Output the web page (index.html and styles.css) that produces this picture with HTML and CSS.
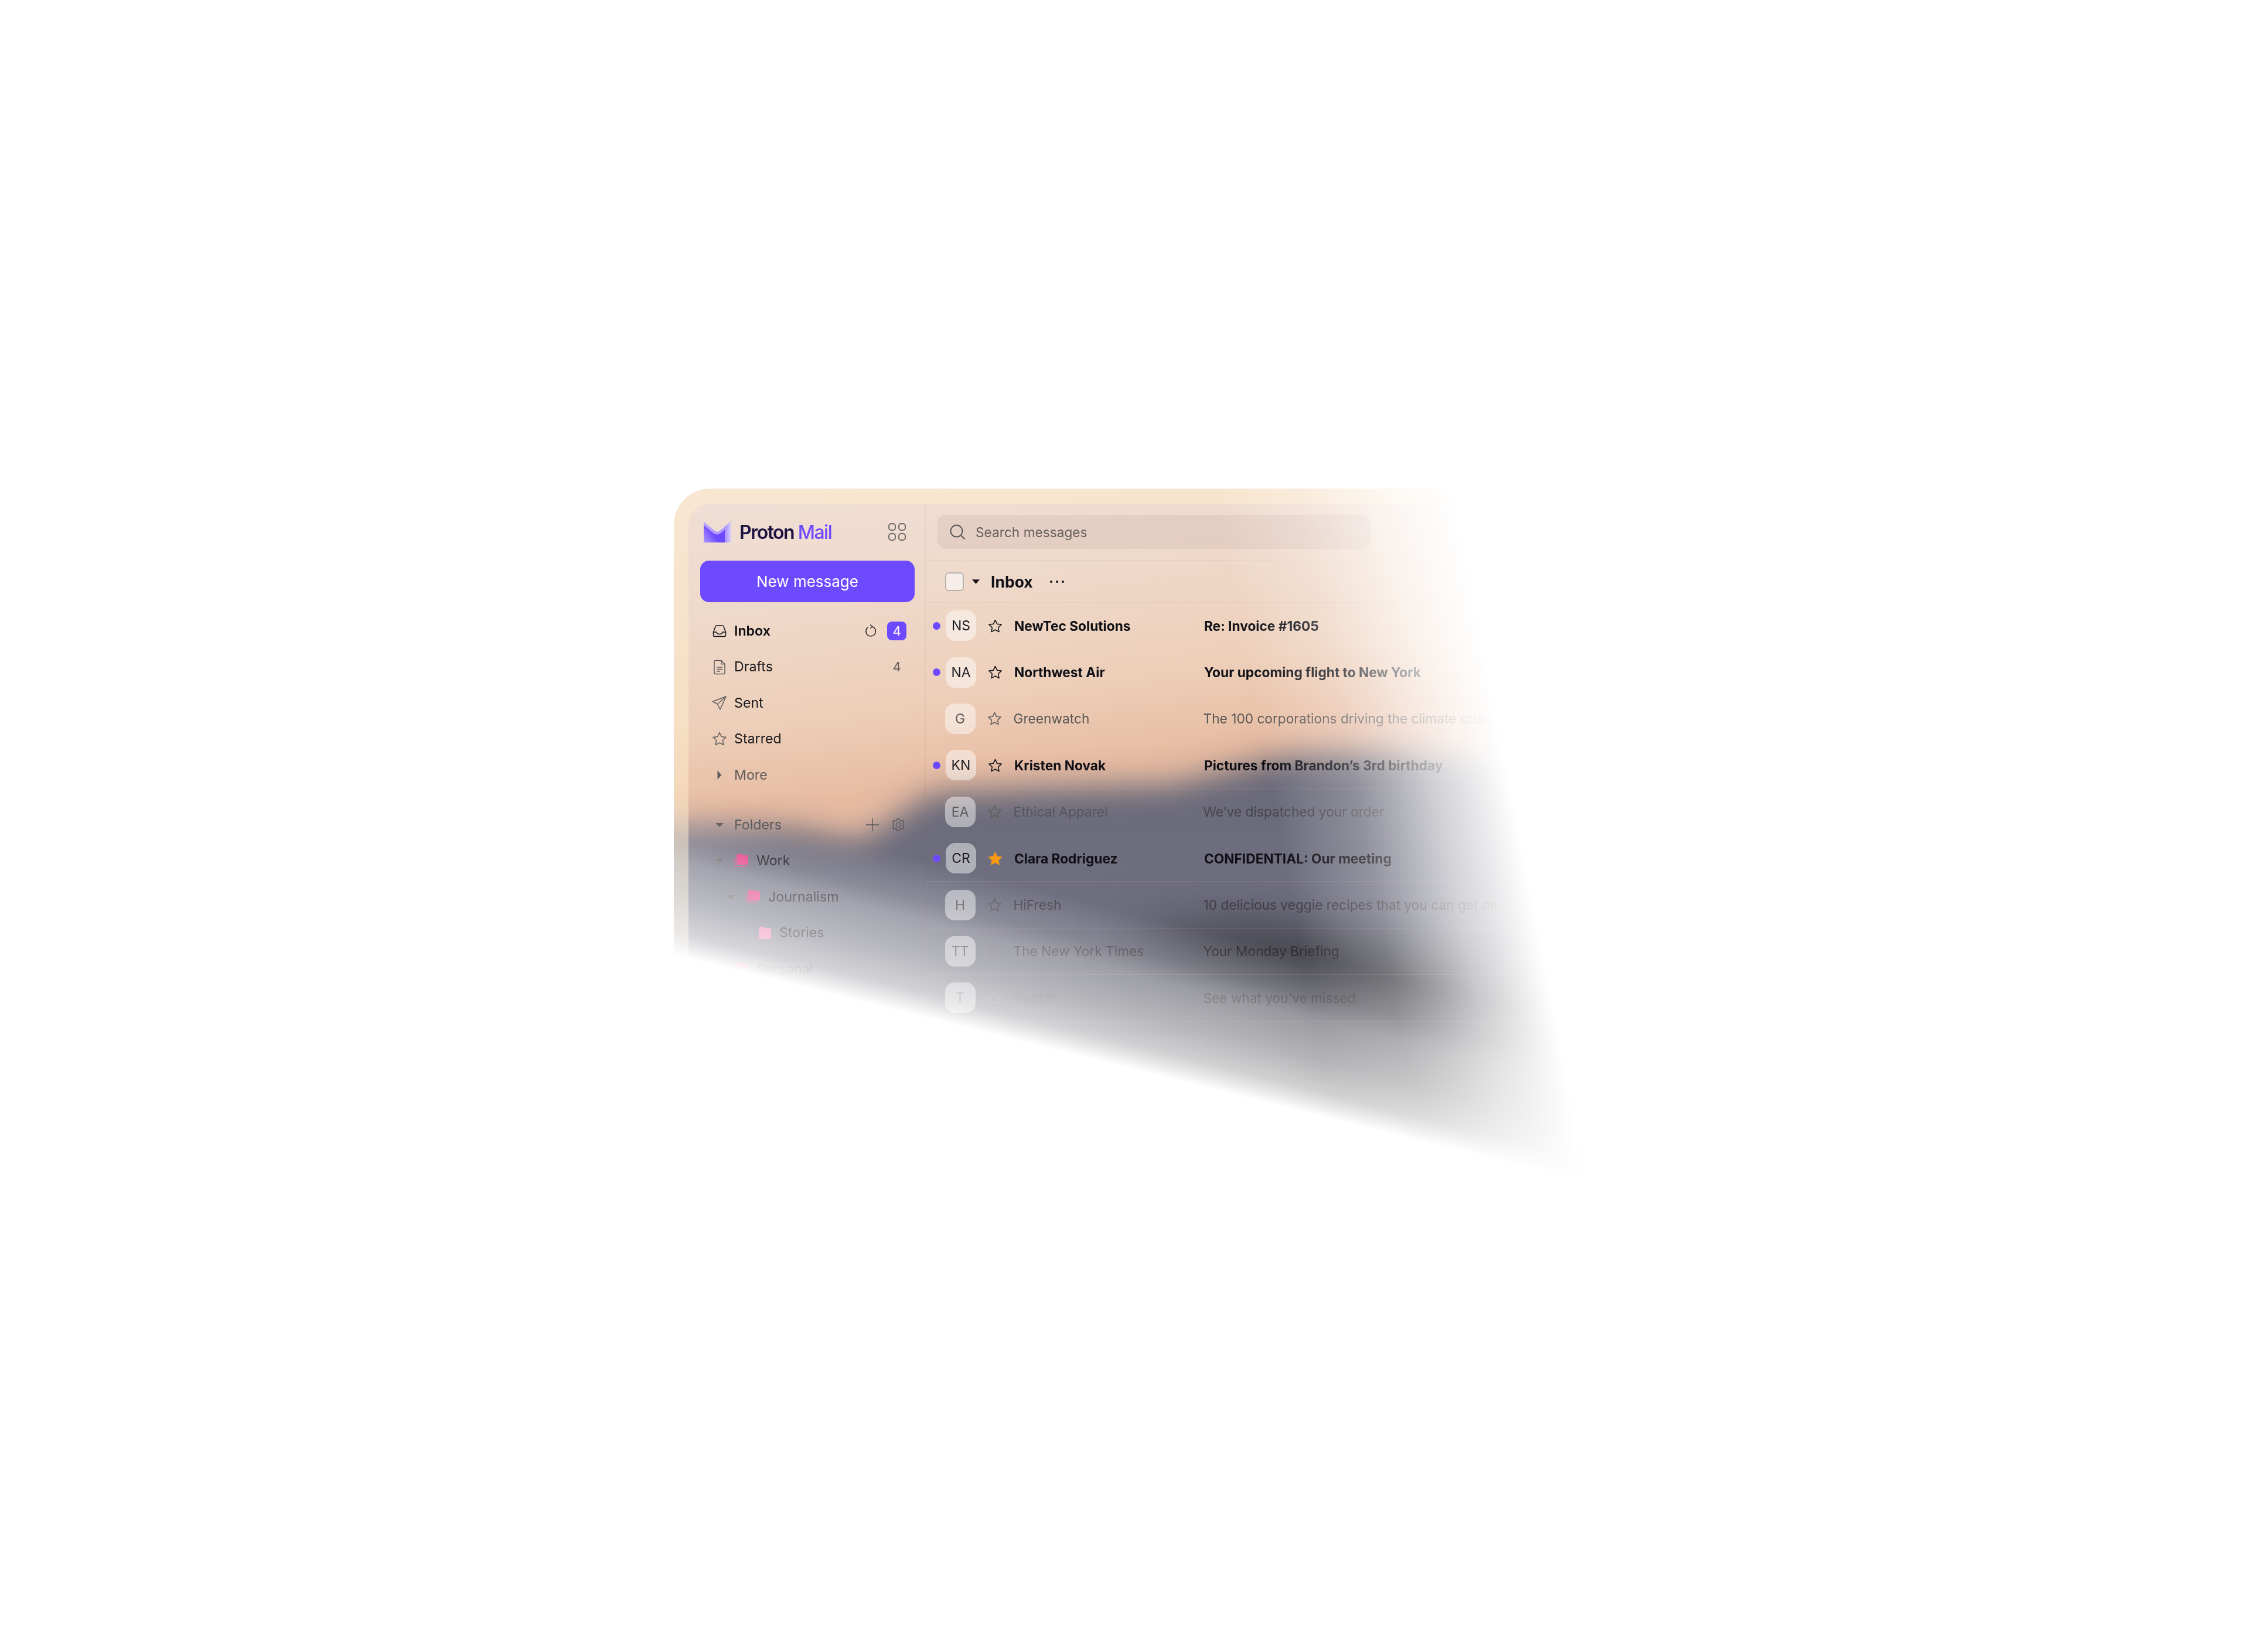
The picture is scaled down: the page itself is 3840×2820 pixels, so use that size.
FILE: index.html
```html
<!DOCTYPE html>
<html lang="en">
<head>
<meta charset="utf-8">
<title>Proton Mail</title>
<link rel="stylesheet" href="styles.css">
</head>
<body>
<div class="stage">
  <svg class="scene" viewBox="0 0 1600 1200" width="1600" height="1200" aria-hidden="true">
    <defs>
      <linearGradient id="sky" x1="0" y1="0" x2="0.18" y2="1">
        <stop offset="0" stop-color="#f1dfd6"/>
        <stop offset="0.18" stop-color="#efd9ca"/>
        <stop offset="0.34" stop-color="#edcfb9"/>
        <stop offset="0.46" stop-color="#e7bba2"/>
      </linearGradient>
      <linearGradient id="land" x1="0" y1="0" x2="0" y2="1">
        <stop offset="0" stop-color="#676776"/>
        <stop offset="0.32" stop-color="#707081"/>
        <stop offset="0.5" stop-color="#61616d"/>
        <stop offset="0.68" stop-color="#59595c"/>
        <stop offset="1" stop-color="#4f4f50"/>
      </linearGradient>
    </defs>
    <rect width="1600" height="1200" fill="url(#sky)"/>
    <polygon class="blur-l" points="-80,575 200,580 320,600 440,520 600,512 850,505 1050,455 1200,450 1700,480 1700,1300 -80,1300" fill="url(#land)"/>
    <polygon class="blur-m" points="760,750 1000,745 1400,825 1500,925 1250,905 950,815" fill="#3e3e44"/>
  </svg>
  <div class="rim"></div>
  <div class="app">
    <aside class="sidebar">
      <div class="brand">
        <svg class="logo" viewBox="0 0 46 36" width="46" height="36" aria-hidden="true">
          <defs>
            <linearGradient id="lg-a" x1="0" y1="0" x2="0.35" y2="1"><stop offset="0" stop-color="#c3b0ff"/><stop offset="1" stop-color="#a68cff"/></linearGradient>
            <linearGradient id="lg-b" x1="0" y1="1" x2="1" y2="0.4"><stop offset="0" stop-color="#b09aff"/><stop offset="0.55" stop-color="#6d4aff"/></linearGradient>
            <linearGradient id="lg-c" x1="0" y1="0" x2="1" y2="0"><stop offset="0" stop-color="#a58dff"/><stop offset="1" stop-color="#d6caff"/></linearGradient>
          </defs>
          <path d="M0 0 18 15.500Q23 20 28 15.500L46 0V33a3 3 0 0 1-3 3H3a3 3 0 0 1-3-3Z" fill="url(#lg-a)"/>
          <path d="M0 6 16 20Q23 25 30 19.500L36 14V36H3a3 3 0 0 1-3-3Z" fill="url(#lg-b)"/>
          <path d="M36 9 46 0V33a3 3 0 0 1-3 3H36Z" fill="url(#lg-c)"/>
        </svg>
        <span class="wordmark">Proton <b class="wordmark-mail">Mail</b></span>
        <svg class="apps" viewBox="0 0 30 30" width="30" height="30" aria-hidden="true"><rect x="1" y="1" width="11" height="11" rx="4"/><rect x="18" y="1" width="11" height="11" rx="4"/><rect x="1" y="18" width="11" height="11" rx="4"/><rect x="18" y="18" width="11" height="11" rx="4"/></svg>
      </div>
      <button class="compose">New message</button>
      <nav class="nav">
        <div class="nav-row strong">
          <svg class="ic dark" viewBox="0 0 24 24"><path d="M1.500 14v5.500a2 2 0 0 0 2 2h17a2 2 0 0 0 2-2V14l-3.500-9.500a2 2 0 0 0-1.900-1.500H6.900A2 2 0 0 0 5 4.500Z"/><path d="M1.500 14H7c.5 2.500 2.500 3.500 5 3.500s4.500-1 5-3.500h5.500"/></svg>
          <span class="nav-label">Inbox</span>
          <svg class="ic dark refresh" viewBox="0 0 24 24"><path d="M14 3.500A9.500 9.500 0 1 1 6 5"/><path d="M10.500 0 14.500 3.500 10.500 7"/></svg>
          <span class="badge">4</span>
        </div>
        <div class="nav-row">
          <svg class="ic" viewBox="0 0 24 24"><path d="M3 3.500a2 2 0 0 1 2-2h10l6 6v15a2 2 0 0 1-2 2H5a2 2 0 0 1-2-2Z"/><path d="M15 1.500v6h6M7 13h10M7 16.500h10M7 20h6"/></svg>
          <span class="nav-label">Drafts</span><span class="count">4</span>
        </div>
        <div class="nav-row">
          <svg class="ic" viewBox="0 0 24 24"><path d="M23 1 .500 9.500l8 4.500L13 23Z"/><path d="M23 1 8.500 14"/></svg>
          <span class="nav-label">Sent</span>
        </div>
        <div class="nav-row">
          <svg class="ic" viewBox="0 0 24 24"><path d="m12 1.500 3.300 7 7.700 1-5.600 5.300 1.400 7.700L12 18.800l-6.800 3.700 1.400-7.700L1 9.500l7.700-1Z"/></svg>
          <span class="nav-label">Starred</span>
        </div>
        <div class="nav-row muted">
          <svg class="ic" viewBox="0 0 24 24"><path class="solid" d="M8.500 4.500 15.500 12l-7 7.500Z"/></svg>
          <span class="nav-label">More</span>
        </div>
        <div class="nav-row muted section">
          <svg class="ic" viewBox="0 0 24 24"><path class="solid" d="M5 9h14l-7 7Z"/></svg>
          <span class="nav-label">Folders</span>
          <svg class="ic plus" viewBox="0 0 24 24"><path d="M12 0v24M0 12h24"/></svg>
          <svg class="ic gear" viewBox="0 0 24 24"><circle cx="12" cy="12" r="4"/><path d="M10 1h4l.6 3 2.700 1.200L20 3.500 22.500 6.500l-1.800 2.500.6 2v2l-.6 2 1.800 2.500L20 20.500l-2.700-1.700-2.700 1.200-.6 3h-4l-.6-3-2.700-1.200L4 20.500 1.500 17.500 3.300 15l-.6-2v-2l.6-2L1.500 6.500 4 3.500l2.700 1.700L9.400 4Z"/></svg>
        </div>
        <div class="nav-row folder l1">
          <svg class="ic caret" viewBox="0 0 24 24"><path class="solid" d="M5 9h14l-7 7Z"/></svg>
          <svg class="fold" viewBox="0 0 26 24"><path class="fold-back" d="M1 6v13a3 3 0 0 0 3 3h17"/><path d="M4 2a2 2 0 0 1 2-2h7l3 2h6a3 3 0 0 1 3 3v11a3 3 0 0 1-3 3H7a3 3 0 0 1-3-3Z"/></svg>
          <span class="nav-label">Work</span>
        </div>
        <div class="nav-row folder l2">
          <svg class="ic caret" viewBox="0 0 24 24"><path class="solid" d="M5 9h14l-7 7Z"/></svg>
          <svg class="fold" viewBox="0 0 26 24"><path class="fold-back" d="M1 6v13a3 3 0 0 0 3 3h17"/><path d="M4 2a2 2 0 0 1 2-2h7l3 2h6a3 3 0 0 1 3 3v11a3 3 0 0 1-3 3H7a3 3 0 0 1-3-3Z"/></svg>
          <span class="nav-label">Journalism</span>
        </div>
        <div class="nav-row folder l3">
          <svg class="fold" viewBox="0 0 24 24"><path d="M1 3a2 2 0 0 1 2-2h7l3 2h8a2 2 0 0 1 2 2v16a2 2 0 0 1-2 2H3a2 2 0 0 1-2-2Z"/></svg>
          <span class="nav-label">Stories</span>
        </div>
        <div class="nav-row folder l4">
          <svg class="fold" viewBox="0 0 24 24"><path d="M1 3a2 2 0 0 1 2-2h7l3 2h8a2 2 0 0 1 2 2v16a2 2 0 0 1-2 2H3a2 2 0 0 1-2-2Z"/></svg>
          <span class="nav-label">Personal</span>
        </div>
      </nav>
    </aside>
    <main class="main">
      <div class="searchbar">
        <div class="search">
          <svg class="ic search-ic" viewBox="0 0 26 26"><circle cx="11.500" cy="11.500" r="10"/><path d="m19 19 6.500 6.500"/></svg>
          <span>Search messages</span>
        </div>
      </div>
      <div class="toolbar">
        <span class="check"></span>
        <svg class="tcaret" viewBox="0 0 14 8"><path d="M0 0h14L7 8Z"/></svg>
        <span class="ttitle">Inbox</span>
        <span class="dots"><i></i><i></i><i></i></span>
      </div>
      <div class="row unread"><span class="dot"></span><span class="avatar">NS</span><svg class="star" viewBox="0 0 24 24"><path d="m12 1.500 3.300 7 7.700 1-5.600 5.300 1.400 7.700L12 18.800l-6.800 3.700 1.400-7.700L1 9.500l7.700-1Z"/></svg><span class="name">NewTec Solutions</span><span class="subject">Re: Invoice #1605</span></div>
      <div class="row unread"><span class="dot"></span><span class="avatar">NA</span><svg class="star" viewBox="0 0 24 24"><path d="m12 1.500 3.300 7 7.700 1-5.600 5.300 1.400 7.700L12 18.800l-6.800 3.700 1.400-7.700L1 9.500l7.700-1Z"/></svg><span class="name">Northwest Air</span><span class="subject">Your upcoming flight to New York</span></div>
      <div class="row"><span class="dot"></span><span class="avatar">G</span><svg class="star" viewBox="0 0 24 24"><path d="m12 1.500 3.300 7 7.700 1-5.600 5.300 1.400 7.700L12 18.800l-6.800 3.700 1.400-7.700L1 9.500l7.700-1Z"/></svg><span class="name">Greenwatch</span><span class="subject">The 100 corporations driving the climate crisis</span></div>
      <div class="row unread"><span class="dot"></span><span class="avatar">KN</span><svg class="star" viewBox="0 0 24 24"><path d="m12 1.500 3.300 7 7.700 1-5.600 5.300 1.400 7.700L12 18.800l-6.800 3.700 1.400-7.700L1 9.500l7.700-1Z"/></svg><span class="name">Kristen Novak</span><span class="subject">Pictures from Brandon’s 3rd birthday</span></div>
      <div class="row ea"><span class="dot"></span><span class="avatar">EA</span><svg class="star" viewBox="0 0 24 24"><path d="m12 1.500 3.300 7 7.700 1-5.600 5.300 1.400 7.700L12 18.800l-6.800 3.700 1.400-7.700L1 9.500l7.700-1Z"/></svg><span class="name">Ethical Apparel</span><span class="subject">We’ve dispatched your order</span></div>
      <div class="row unread"><span class="dot"></span><span class="avatar">CR</span><svg class="star on" viewBox="0 0 24 24"><path d="m12 1.500 3.300 7 7.700 1-5.600 5.300 1.400 7.700L12 18.800l-6.800 3.700 1.400-7.700L1 9.500l7.700-1Z"/></svg><span class="name">Clara Rodriguez</span><span class="subject">CONFIDENTIAL: Our meeting</span></div>
      <div class="row hi"><span class="dot"></span><span class="avatar">H</span><svg class="star" viewBox="0 0 24 24"><path d="m12 1.500 3.300 7 7.700 1-5.600 5.300 1.400 7.700L12 18.800l-6.800 3.700 1.400-7.700L1 9.500l7.700-1Z"/></svg><span class="name">HiFresh</span><span class="subject">10 delicious veggie recipes that you can get on…</span></div>
      <div class="row fade-a"><span class="dot"></span><span class="avatar">TT</span><svg class="star" viewBox="0 0 24 24"><path d="m12 1.500 3.300 7 7.700 1-5.600 5.300 1.400 7.700L12 18.800l-6.800 3.700 1.400-7.700L1 9.500l7.700-1Z"/></svg><span class="name">The New York Times</span><span class="subject">Your Monday Briefing</span></div>
      <div class="row fade-b"><span class="dot"></span><span class="avatar">T</span><svg class="star" viewBox="0 0 24 24"><path d="m12 1.500 3.300 7 7.700 1-5.600 5.300 1.400 7.700L12 18.800l-6.800 3.700 1.400-7.700L1 9.500l7.700-1Z"/></svg><span class="name">Twitter</span><span class="subject">See what you’ve missed</span></div>
    </main>
  </div>
</div>
</body>
</html>
```
FILE: styles.css
```css
* { box-sizing: border-box; }
html, body { margin: 0; background: #fff; }
body {
  width: 3840px; height: 2820px;
  padding: 834px 0 0 1150px;
  font-family: Inter, "Liberation Sans", sans-serif;
  color: #17171c;
  overflow: hidden;
}
.stage {
  position: relative;
  width: 1600px; height: 1200px;
  border-top-left-radius: 62px;
  overflow: hidden;
  -webkit-mask-image:
    linear-gradient(79deg, #000 1130px, rgba(0,0,0,.75) 1270px, rgba(0,0,0,.3) 1410px, transparent 1534px),
    linear-gradient(194deg, #000 900px, rgba(0,0,0,.81) 965px, rgba(0,0,0,.63) 1001px, rgba(0,0,0,.46) 1067px, rgba(0,0,0,.28) 1120px, transparent 1160px);
  mask-image:
    linear-gradient(79deg, #000 1130px, rgba(0,0,0,.75) 1270px, rgba(0,0,0,.3) 1410px, transparent 1534px),
    linear-gradient(194deg, #000 900px, rgba(0,0,0,.81) 965px, rgba(0,0,0,.63) 1001px, rgba(0,0,0,.46) 1067px, rgba(0,0,0,.28) 1120px, transparent 1160px);
  -webkit-mask-composite: source-in;
  mask-composite: intersect;
}
.scene { position: absolute; inset: 0; display: block; }
.blur-l { filter: blur(26px); }
.blur-m { filter: blur(45px); }
.rim {
  position: absolute; inset: 0 -40px -40px 0;
  border: solid rgba(255, 238, 205, .5);
  border-width: 26px 0 0 25px;
  border-top-left-radius: 62px;
}
.app {
  position: relative;
  display: flex;
  height: 100%;
  padding: 26px 0 0 25px;
}
.sidebar { width: 405px; flex: none; border-right: 2px solid rgba(90,70,80,.05); }
.brand { display: flex; align-items: center; height: 97px; padding: 0 32px 0 26px; }
.logo { flex: none; margin-top: -2px; }
.wordmark { margin-left: 15px; font-size: 32px; font-weight: 600; letter-spacing: -1.500px; color: #1c1340; white-space: nowrap; }
.wordmark-mail { font-weight: 500; color: #6d4aff; }
.apps { margin-left: auto; margin-top: -1px; fill: none; stroke: #6d6a6a; stroke-width: 2; }
.compose {
  display: block;
  width: 366px; height: 71px;
  margin-left: 20px;
  border: 0; border-radius: 15px;
  background: #6d4aff; color: #fff;
  font: 400 26px Inter, sans-serif;
}
.nav { margin-top: 18px; }
.nav-row { display: flex; align-items: center; height: 61.5px; padding: 0 31px 0 41px; font-size: 23.200px; color: #18181c; }
.nav-row.strong { font-weight: 600; color: #0d0d12; }
.nav-row.muted { color: #5f5c5b; }
.nav-row.section { margin-top: 23.500px; color: #55555a; }
.nav-label { margin-left: 13px; white-space: nowrap; }
.ic { width: 24px; height: 24px; flex: none; fill: none; stroke: #5f5c5b; stroke-width: 1.500; stroke-linejoin: round; overflow: visible; }
.ic.dark { stroke: #17171c; }
.solid { fill: #5c5a5a; stroke: none; }
.refresh { margin-left: auto; width: 21px; height: 22px; }
.badge { width: 33px; height: 32px; margin-left: 17px; border-radius: 8px; background: #6d4aff; color: #fff; font-size: 22px; font-weight: 400; line-height: 32px; text-align: center; }
.count { margin-left: auto; width: 33px; color: #5f5c5b; font-size: 22px; text-align: center; }
.plus { margin-left: auto; width: 22px; height: 22px; stroke: #55555c; }
.gear { margin-left: 22px; width: 22px; height: 22px; margin-right: 3px; stroke: #55555c; }
.fold { width: 25px; height: 23px; flex: none; fill: #e33c82; overflow: visible; }
.fold-back { fill: none; stroke: #e33c82; stroke-width: 1.500; }
.folder .nav-label { margin-left: 13px; }
.folder .caret { margin-right: 14px; width: 24px; }
.l1 .caret { margin-right: 13px; }
.caret .solid { fill: #5f5d58; }
.nav-row.folder { color: #17171c; }
.l2 { padding-left: 60px; }
.l3 { padding-left: 119px; }
.l3 .fold { width: 23px; fill: #ea70a3; }
.l4 { padding-left: 79px; }
.nav-row.l4 { color: #26262b; }
.l4 .fold { fill: #e33c82; }
.main { flex: 1; min-width: 0; }
.searchbar { height: 97px; padding: 19px 0 0 20px; border-bottom: 1px solid rgba(120,90,90,.06); }
.search { display: flex; align-items: center; width: 739px; height: 58px; padding-left: 21px; border-radius: 14px; background: rgba(100,70,80,.075); color: #66625f; font-size: 22.700px; }
.search-ic { width: 26px; height: 26px; margin-right: 18px; stroke: #55524f; stroke-width: 1.800; }
.toolbar { display: flex; align-items: center; height: 72px; padding-left: 33px; border-bottom: 1px solid rgba(120,90,90,.06); }
.check { width: 32px; height: 32px; border: 2px solid #b8b3af; border-radius: 6px; background: #f7eee9; }
.tcaret { width: 13px; height: 8px; margin-left: 14px; fill: #14141a; }
.ttitle { margin-left: 19px; font-size: 26.500px; font-weight: 700; color: #101016; }
.dots { display: flex; gap: 6px; margin-left: 29px; }
.dots i { width: 4px; height: 4px; border-radius: 50%; background: #14141a; }
.row { display: flex; align-items: center; height: 79.400px; padding-left: 12px; border-bottom: 1px solid rgba(255,240,235,.1); color: #5a5756; font-size: 22.700px; white-space: nowrap; }
.dot { flex: none; width: 13px; height: 13px; margin: 0 9px 0 -1.500px; }
.unread .dot { margin-left: 0; border-radius: 50%; background: #6d4aff; }
.avatar { flex: none; width: 52px; height: 52px; border-radius: 16px; background: rgba(255,255,255,.46); text-align: center; line-height: 52px; font-size: 23px; color: #5f5c5c; }
.star { flex: none; width: 23px; height: 23px; margin-left: 21px; fill: none; stroke: #5f5c5b; stroke-width: 1.600; stroke-linejoin: round; }
.name { flex: none; width: 324px; margin-left: 21px; }
.subject { flex: none; }
.unread { color: #0f0f15; font-weight: 700; }
.unread .avatar { color: #1c1c22; font-weight: 400; }
.unread .star { stroke: #14141a; }
.star.on { fill: #f59a12; stroke: #f59a12; }
.ea .name { color: #55555a; }
.ea .subject { color: #45454a; }
.hi { color: #47474b; }
.hi .subject { color: #3e3e42; }
.hi .star { stroke: #55555a; }
.fade-a .name { color: #3c3c40; }
.fade-a .subject { color: #2c2c30; }
.fade-a .star { stroke: #66666a; }
.fade-a .avatar { color: #47474a; }
.fade-b .name { color: #55555a; }
.fade-b .subject { color: #38383c; }
.fade-b .star { stroke: #77777a; }
.fade-b .avatar { color: #5d5d60; }
```
